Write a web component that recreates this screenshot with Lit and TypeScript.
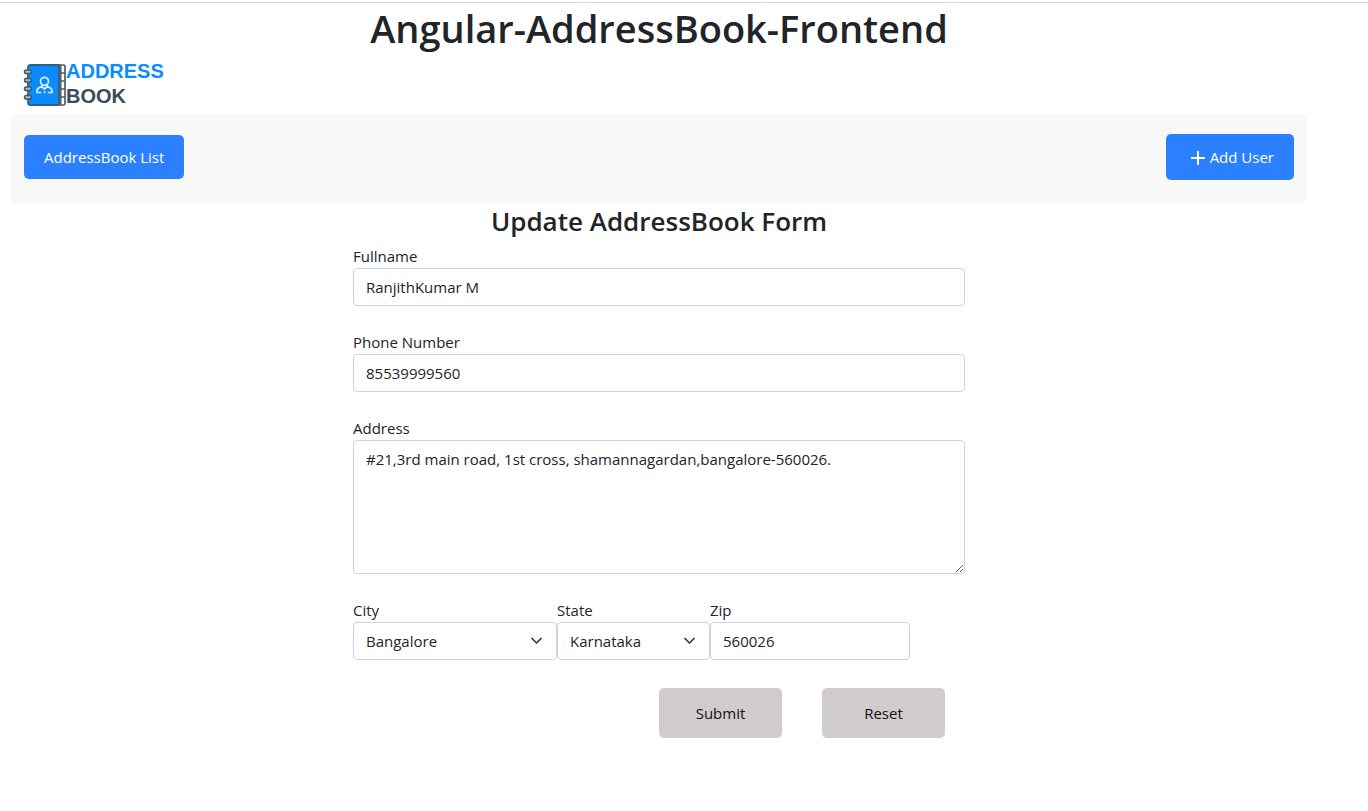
import { LitElement, html, css } from "lit";
import { customElement } from "lit/decorators.js";

@customElement("app-logo")
export class AppLogo extends LitElement {
  static styles = css`
    :host {
      display: flex;
      align-items: flex-start;
      font: bold 20px/25px "Liberation Sans", Arial, sans-serif;
    }
    .mark {
      flex: none;
      width: 43px;
      height: 42px;
      margin-top: 5px;
    }
    .words {
      display: flex;
      flex-direction: column;
    }
    .first {
      color: #0a8bff;
    }
    .second {
      color: #3c4b59;
    }
  `;

  render() {
    return html`
      <svg class="mark" viewBox="0 0 43 42" fill="none" aria-hidden="true">
        <path d="M36 1h4.500q1.500 0 1.500 1.500v37q0 1.500-1.500 1.500H36z" fill="#fff" stroke="#4b5f6d" stroke-width="1.700" />
        <path d="M37 9h5M37 17h5M37 25h5M37 33h5" stroke="#4b5f6d" stroke-width="1.500" />
        <path d="M7.500 1H36v40H7.500Q5 41 5 38.500v-35Q5 1 7.500 1z" fill="#0a8bff" stroke="#34607f" stroke-width="1.800" />
        <path d="M37 1v40" stroke="#4b5f6d" stroke-width="3" />
        <g fill="#a9bac6" stroke="#41586a" stroke-width="1.500">
          <rect x="1.500" y="6" width="7" height="3.600" rx="1.800" />
          <rect x="1.500" y="14.500" width="7" height="3.600" rx="1.800" />
          <rect x="1.500" y="23" width="7" height="3.600" rx="1.800" />
          <rect x="1.500" y="31.500" width="7" height="3.600" rx="1.800" />
        </g>
        <g stroke="#d9f0ff" stroke-width="1.700" stroke-linecap="round" stroke-linejoin="round">
          <circle cx="21.500" cy="17.300" r="4" />
          <path d="M19 21l-.5 1.500-2.500 1.300q-2 1-2 3v1.700h3.500M24 21l.5 1.500 2.500 1.300q2 1 2 3v1.700h-3.500M18.500 22.500l3 2.500 3-2.500M21.500 27.800v.7" />
        </g>
      </svg>
      <span class="words">
        <span class="first">ADDRESS</span>
        <span class="second">BOOK</span>
      </span>
    `;
  }
}

@customElement("app-root")
export class AppRoot extends LitElement {
  static styles = css`
    :host {
      display: block;
      color: #212529;
      font: 400 15px/24px "Open Sans", "Noto Sans", sans-serif;
    }
    *,
    *::before,
    *::after {
      box-sizing: border-box;
    }
    .page {
      margin-top: 2px;
      border-top: 1px solid #dcdcdc;
      padding: 1px 61px 0 11px;
    }
    h1,
    h2 {
      margin: 0;
      text-align: center;
      font-weight: 600;
    }
    h1 {
      font-size: 38px;
      line-height: 48px;
    }
    h2 {
      font-size: 26px;
      line-height: 36px;
      padding-bottom: 5px;
    }
    .logo {
      padding: 7px 12px 5px;
    }
    .bar {
      display: flex;
      justify-content: space-between;
      align-items: center;
      padding: 20px 13px 23px;
      border-radius: 5px;
      background: #f8f8f8;
    }
    button {
      border: 0;
      border-radius: 5px;
      font: inherit;
      cursor: pointer;
    }
    .primary {
      display: flex;
      align-items: center;
      gap: 4px;
      padding: 10px 20px;
      background: #2b80ff;
      color: #fff;
    }
    .add {
      padding: 11px 20px 11px 24px;
    }
    .plus {
      width: 16px;
      height: 16px;
    }
    form {
      display: grid;
      gap: 24px;
      width: 100%;
      max-width: 612px;
      margin: 0 auto;
    }
    .field {
      display: flex;
      flex-direction: column;
    }
    .control {
      display: block;
      width: 100%;
      height: 38px;
      margin: 0;
      padding: 6px 12px;
      border: 1px solid #ced4da;
      border-radius: 4px;
      background: #fff;
      color: inherit;
      font: inherit;
      outline: none;
    }
    .area {
      height: 134px;
      resize: vertical;
    }
    .row {
      display: grid;
      grid-template-columns: 4fr 3fr 5fr;
    }
    .zip {
      max-width: 200px;
    }
    .pick {
      display: grid;
      align-items: center;
    }
    .pick > * {
      grid-area: 1 / 1;
    }
    .pick select {
      appearance: none;
      padding-right: 36px;
    }
    .chevron {
      justify-self: end;
      width: 16px;
      height: 12px;
      margin-right: 12px;
      pointer-events: none;
    }
    .actions {
      display: flex;
      gap: 40px;
      padding: 4px 0 24px 50%;
    }
    .action {
      width: 123px;
      height: 50px;
      background: #d1cccc;
      color: #111;
    }
  `;

  private select(id: string, label: string, value: string) {
    return html`
      <div class="field">
        <label for=${id}>${label}</label>
        <div class="pick">
          <select class="control" id=${id}>
            <option selected>${value}</option>
          </select>
          <svg class="chevron" viewBox="0 0 16 12" aria-hidden="true">
            <path d="M3 3.500L7.500 8 12 3.500" fill="none" stroke="#343a40" stroke-width="1.700" stroke-linecap="round" stroke-linejoin="round" />
          </svg>
        </div>
      </div>
    `;
  }

  render() {
    return html`
      <div class="page">
        <h1>Angular-AddressBook-Frontend</h1>
        <app-logo class="logo"></app-logo>
        <nav class="bar">
          <button class="primary" type="button">AddressBook List</button>
          <button class="primary add" type="button">
            <svg class="plus" viewBox="0 0 16 16" aria-hidden="true">
              <path d="M1 9h14M8 2v14" stroke="#fff" stroke-width="2" />
            </svg>
            Add User
          </button>
        </nav>
        <h2>Update AddressBook Form</h2>
        <form @submit=${(e: Event) => e.preventDefault()}>
          <div class="field">
            <label for="name">Fullname</label>
            <input class="control" id="name" type="text" value="RanjithKumar M" />
          </div>
          <div class="field">
            <label for="phone">Phone Number</label>
            <input class="control" id="phone" type="tel" value="85539999560" />
          </div>
          <div class="field">
            <label for="address">Address</label>
            <textarea class="control area" id="address" .value=${"#21,3rd main road, 1st cross, shamannagardan,bangalore-560026."}></textarea>
          </div>
          <div class="row">
            ${this.select("city", "City", "Bangalore")}
            ${this.select("state", "State", "Karnataka")}
            <div class="field zip">
              <label for="zip">Zip</label>
              <input class="control" id="zip" type="text" value="560026" />
            </div>
          </div>
          <div class="actions">
            <button class="action" type="submit">Submit</button>
            <button class="action" type="reset">Reset</button>
          </div>
        </form>
      </div>
    `;
  }
}
